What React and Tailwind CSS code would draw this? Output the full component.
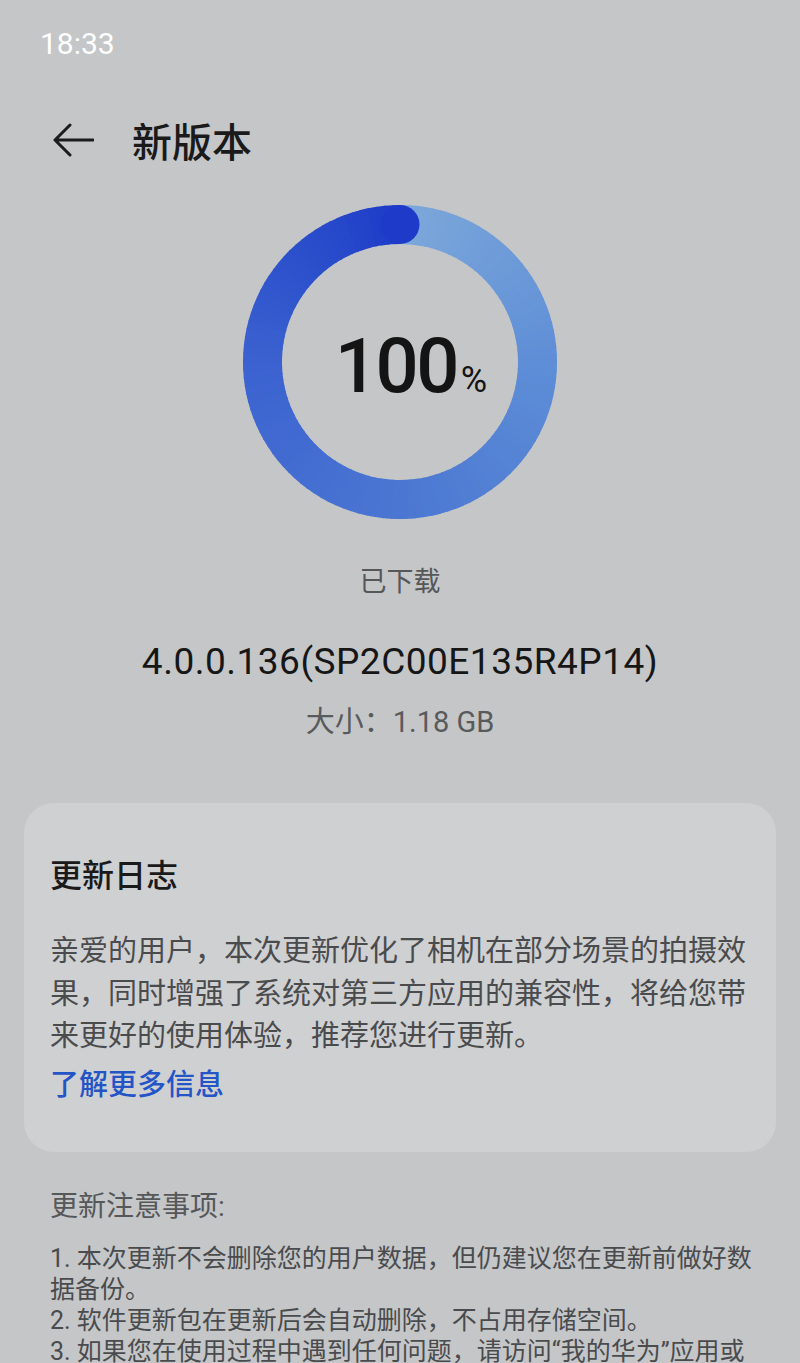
import React from "react";

const stops = [
  [0, [0x7c, 0xa8, 0xda]],
  [0.25, [0x5e, 0x8e, 0xd7]],
  [0.5, [0x4b, 0x77, 0xd2]],
  [0.75, [0x3b, 0x62, 0xd0]],
  [0.93, [0x26, 0x48, 0xca]],
  [1, [0x1d, 0x3b, 0xc8]],
];

function colorAt(t) {
  for (let i = 0; i < stops.length - 1; i++) {
    const [t0, c0] = stops[i];
    const [t1, c1] = stops[i + 1];
    if (t >= t0 && t <= t1) {
      const f = (t - t0) / (t1 - t0);
      const c = c0.map((v, k) => Math.round(v + (c1[k] - v) * f));
      return `rgb(${c[0]},${c[1]},${c[2]})`;
    }
  }
  return "rgb(29,59,200)";
}

function Ring() {
  const size = 314;
  const cx = 157;
  const cy = 157;
  const r = 137.5;
  const sw = 39;
  const N = 120;
  const segs = [];
  for (let i = 0; i < N; i++) {
    const a0 = (i / N) * 360;
    const a1 = Math.min(((i + 1) / N) * 360 + 0.6, 360);
    const rad0 = ((a0 - 90) * Math.PI) / 180;
    const rad1 = ((a1 - 90) * Math.PI) / 180;
    const x0 = cx + r * Math.cos(rad0);
    const y0 = cy + r * Math.sin(rad0);
    const x1 = cx + r * Math.cos(rad1);
    const y1 = cy + r * Math.sin(rad1);
    segs.push(
      <path
        key={i}
        d={`M ${x0} ${y0} A ${r} ${r} 0 0 1 ${x1} ${y1}`}
        stroke={colorAt((i + 0.5) / N)}
        strokeWidth={sw}
        fill="none"
      />
    );
  }
  return (
    <svg width={size} height={size} viewBox={`0 0 ${size} ${size}`} className="block">
      {segs}
      <circle cx={cx} cy={cy - r} r={sw / 2} fill="#1d3bc8" />
    </svg>
  );
}

export default function App() {
  const font = "font-['Roboto','Noto_Sans_CJK_SC',sans-serif]";
  return (
    <div className={`w-[800px] h-[1363px] overflow-hidden bg-[#c4c6c8] ${font}`}>
      {/* status bar */}
      <div className="h-[88px] pl-[40px] pt-[26px]">
        <div className="text-[30px] leading-[36px] text-white">18:33</div>
      </div>

      {/* nav */}
      <div className="h-[104px] flex items-center pl-[52px]">
        <svg width="42" height="36" viewBox="0 0 42 36" className="block">
          <path
            d="M3 18 H41 M18 3 L3 18 L18 33"
            stroke="#1c1c1c"
            strokeWidth="3"
            fill="none"
            strokeLinecap="round"
            strokeLinejoin="round"
          />
        </svg>
        <div className="ml-[38px] text-[40px] leading-none text-[#1a1a1a] font-['Noto_Sans_CJK_SC',sans-serif] font-medium">
          新版本
        </div>
      </div>

      {/* ring */}
      <div className="mt-[13px] flex justify-center">
        <div className="relative w-[314px] h-[314px]">
          <Ring />
          <div className="absolute inset-0 flex items-center justify-center">
            <div className="flex items-baseline ml-[22px] mt-[8px] text-[#141414]">
              <span className="text-[76px] leading-none tracking-[-2.5px] font-medium">100</span>
              <span className="text-[36px] leading-none ml-[4px]">%</span>
            </div>
          </div>
        </div>
      </div>

      <div className="mt-[45px] text-center text-[27px] leading-[36px] text-[#555759]">已下载</div>
      <div className="mt-[40px] text-center text-[37px] leading-[44px] tracking-[0.5px] text-[#161616]">
        4.0.0.136(SP2C00E135R4P14)
      </div>
      <div className="mt-[20px] text-center text-[29px] leading-[36px] text-[#585a5c]">大小：1.18 GB</div>

      {/* card */}
      <div className="mt-[63px] mx-[24px] h-[349px] rounded-[30px] bg-[#cfd0d2] px-[26px] pt-[53px]">
        <div className="text-[32px] leading-[40px] text-[#1a1a1a] font-medium">更新日志</div>
        <div className="mt-[34px] text-[29px] leading-[42.5px] text-[#4a4b4d]">
          <div className="whitespace-nowrap">亲爱的用户，本次更新优化了相机在部分场景的拍摄效</div>
          <div className="whitespace-nowrap">果，同时增强了系统对第三方应用的兼容性，将给您带</div>
          <div className="whitespace-nowrap">来更好的使用体验，推荐您进行更新。</div>
        </div>
        <div className="mt-[7px] text-[29px] leading-[40px] text-[#2455c6] font-medium">了解更多信息</div>
      </div>

      <div className="mt-[37px] pl-[50px] text-[28px] leading-[36px] text-[#555759]">更新注意事项:</div>
      <div className="mt-[18px] pl-[50px] text-[25px] leading-[31px] text-[#4a4b4d]">
        <div className="whitespace-nowrap">1. 本次更新不会删除您的用户数据，但仍建议您在更新前做好数</div>
        <div className="whitespace-nowrap">据备份。</div>
        <div className="whitespace-nowrap">2. 软件更新包在更新后会自动删除，不占用存储空间。</div>
        <div className="whitespace-nowrap">3. 如果您在使用过程中遇到任何问题，请访问“我的华为”应用或</div>
      </div>
    </div>
  );
}
